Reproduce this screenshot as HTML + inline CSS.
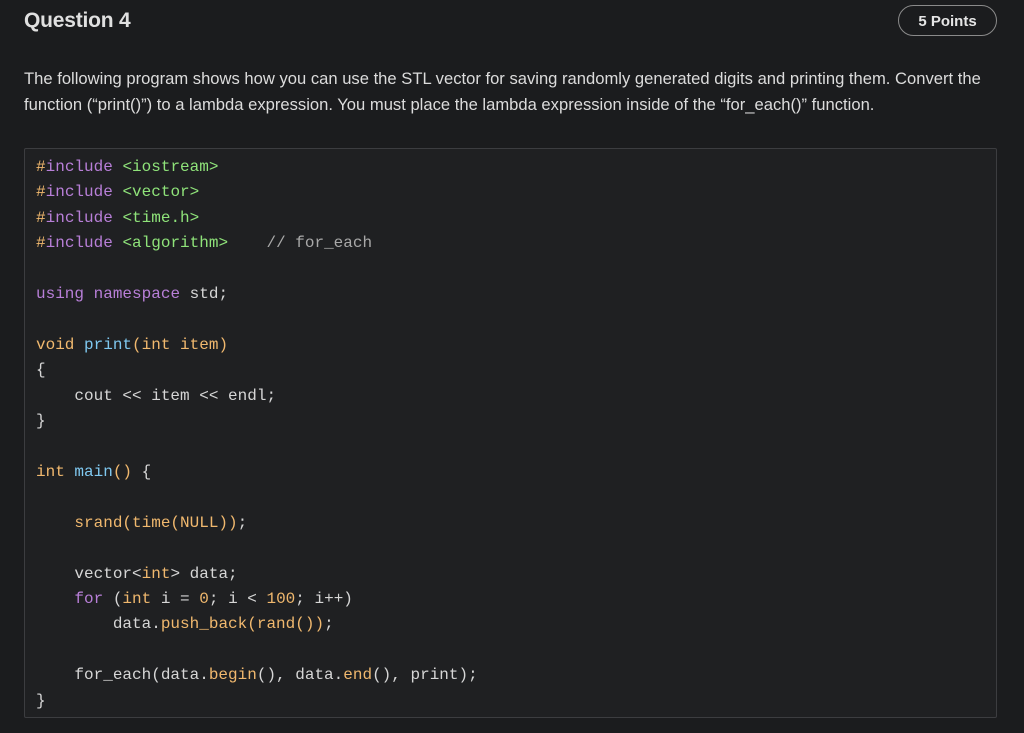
<!DOCTYPE html>
<html><head><meta charset="utf-8"><style>
body{margin:0;width:1024px;height:733px;background:#1b1c1e;overflow:hidden;font-family:"Liberation Sans",sans-serif;color:#dcdcdc;position:relative}
.t{position:absolute;left:24px;top:9px;font-size:21px;font-weight:bold;color:#e0e0e0;letter-spacing:-0.2px}
.b{position:absolute;left:898px;top:5px;width:99px;height:31px;border:1px solid #8a8a8a;border-radius:16px;box-sizing:border-box;text-align:center;line-height:31px;font-size:15px;font-weight:bold;color:#e6e6e6}
.p{position:absolute;left:24px;top:66px;font-size:16.6px;line-height:25.5px;color:#dcdcdc;white-space:nowrap}
.c{position:absolute;left:24px;top:148px;width:973px;height:570px;box-sizing:border-box;background:#1f2022;border:1px solid #3c3d40;border-radius:2px}
pre{position:absolute;left:36px;top:155px;margin:0;font-family:"Liberation Mono",monospace;font-size:16px;line-height:25.4px;color:#d6d6d6}
.o{color:#f0b86e}.k{color:#b87fd8}.g{color:#8fe37a}.f{color:#7fc8f0}.m{color:#a8a8a8}
</style></head><body>
<div class="t">Question 4</div>
<div class="b">5 Points</div>
<div class="p">The following program shows how you can use the STL vector for saving randomly generated digits and printing them. Convert the<br>function (“print()”) to a lambda expression. You must place the lambda expression inside of the “for_each()” function.</div>
<div class="c"></div>
<pre><span class="o">#</span><span class="k">include</span> <span class="g">&lt;iostream&gt;</span>
<span class="o">#</span><span class="k">include</span> <span class="g">&lt;vector&gt;</span>
<span class="o">#</span><span class="k">include</span> <span class="g">&lt;time.h&gt;</span>
<span class="o">#</span><span class="k">include</span> <span class="g">&lt;algorithm&gt;</span>    <span class="m">// for_each</span>

<span class="k">using</span> <span class="k">namespace</span> std;

<span class="o">void</span> <span class="f">print</span><span class="o">(int item)</span>
{
    cout &lt;&lt; item &lt;&lt; endl;
}

<span class="o">int</span> <span class="f">main</span><span class="o">()</span> {

    <span class="o">srand(time(NULL))</span>;

    vector&lt;<span class="o">int</span>&gt; data;
    <span class="k">for</span> (<span class="o">int</span> i = <span class="o">0</span>; i &lt; <span class="o">100</span>; i++)
        data.<span class="o">push_back(rand())</span>;

    for_each(data.<span class="o">begin</span>(), data.<span class="o">end</span>(), print);
}</pre>
</body></html>
